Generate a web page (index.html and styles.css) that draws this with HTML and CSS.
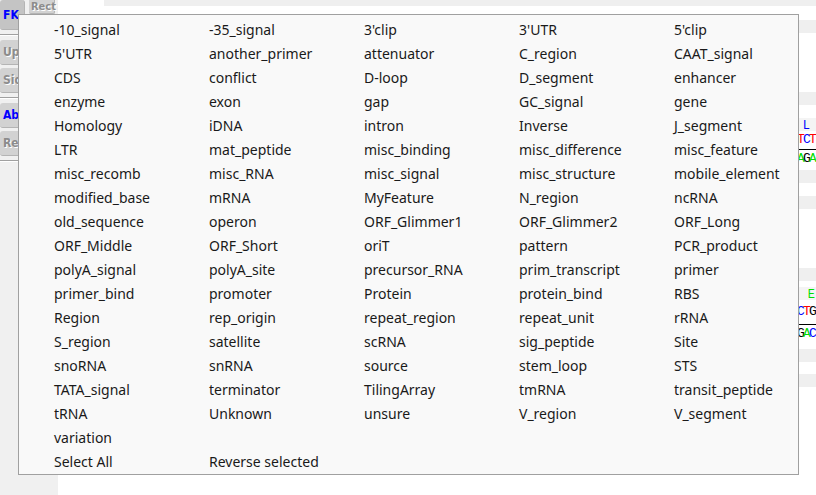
FILE: index.html
```html
<!DOCTYPE html>
<html lang="en">
<head>
    <meta charset="UTF-8">
    <meta name="viewport" content="width=device-width, initial-scale=1.0">
    <title>Feature Types</title>
    <link rel="stylesheet" href="styles.css">
</head>
<body>
    <div class="app">
        <div class="side">
            <div class="tool-row">
                <div class="tool tool-active">FK</div>
                <div class="tool tool-small">Rect</div>
            </div>
            <div class="sep"></div>
            <div class="tool">Up</div>
            <div class="tool">Sid</div>
            <div class="sep"></div>
            <div class="tool tool-blue">Ab</div>
            <div class="tool">Re</div>
            <div class="sep"></div>
        </div>
        <div class="main">
            <div class="band band-top"></div>
            <div class="band" style="margin-top: 14px"></div>
            <div class="band" style="margin-top: 59px"></div>
            <div class="track" style="margin-top: 13px">
                <div class="track-label"><span class="b">L</span><span class="pad">&nbsp;</span></div>
                <div class="seq"><span class="r">T</span><span class="b">C</span><span class="r">T</span></div>
                <div class="seq seq-rev"><span class="g">A</span><span class="k">G</span><span class="g">A</span></div>
            </div>
            <div class="band" style="margin-top: 5px"></div>
            <div class="band" style="margin-top: 13px"></div>
            <div class="band" style="margin-top: 59px"></div>
            <div class="track track-wide" style="margin-top: 6px">
                <div class="track-label"><span class="g">E</span></div>
                <div class="seq"><span class="b">C</span><span class="r">T</span><span class="k">G</span></div>
                <div class="seq seq-rev"><span class="k">G</span><span class="g">A</span><span class="b">C</span></div>
            </div>
            <div class="band" style="margin-top: 9px"></div>
            <div class="band" style="margin-top: 12px"></div>
        </div>
    </div>

    <div class="menu">
        <div id="menuItems" class="menu-grid"></div>
    </div>

    <script>
        const featureTypes = [
            "-10_signal", "-35_signal", "3'clip", "3'UTR", "5'clip",
            "5'UTR", "another_primer", "attenuator", "C_region", "CAAT_signal",
            "CDS", "conflict", "D-loop", "D_segment", "enhancer",
            "enzyme", "exon", "gap", "GC_signal", "gene",
            "Homology", "iDNA", "intron", "Inverse", "J_segment",
            "LTR", "mat_peptide", "misc_binding", "misc_difference", "misc_feature",
            "misc_recomb", "misc_RNA", "misc_signal", "misc_structure", "mobile_element",
            "modified_base", "mRNA", "MyFeature", "N_region", "ncRNA",
            "old_sequence", "operon", "ORF_Glimmer1", "ORF_Glimmer2", "ORF_Long",
            "ORF_Middle", "ORF_Short", "oriT", "pattern", "PCR_product",
            "polyA_signal", "polyA_site", "precursor_RNA", "prim_transcript", "primer",
            "primer_bind", "promoter", "Protein", "protein_bind", "RBS",
            "Region", "rep_origin", "repeat_region", "repeat_unit", "rRNA",
            "S_region", "satellite", "scRNA", "sig_peptide", "Site",
            "snoRNA", "snRNA", "source", "stem_loop", "STS",
            "TATA_signal", "terminator", "TilingArray", "tmRNA", "transit_peptide",
            "tRNA", "Unknown", "unsure", "V_region", "V_segment",
            "variation"
        ];

        const menu = document.getElementById('menuItems');
        let html = '';
        featureTypes.forEach(name => {
            html += `<div class="menu-item">${name}</div>`;
        });
        html += '<div class="menu-item menu-action">Select All</div>';
        html += '<div class="menu-item">Reverse selected</div>';
        menu.innerHTML = html;
    </script>
</body>
</html>
```

FILE: styles.css
```css
body {
    margin: 0;
    width: 816px;
    height: 495px;
    overflow: hidden;
    background-color: #fff;
    font-family: 'Noto Sans', 'Segoe UI', sans-serif;
}
.app {
    display: flex;
    height: 495px;
}
.side {
    width: 58px;
    flex-shrink: 0;
    background-color: #f0f0f0;
    display: flex;
    flex-direction: column;
    gap: 3px;
}
.tool-row {
    display: flex;
    gap: 4px;
    align-items: flex-start;
}
.tool {
    width: 25px;
    height: 25px;
    box-sizing: border-box;
    background-color: #d2d2d2;
    border-radius: 3px;
    border-right: 1px solid #b4b4b4;
    border-bottom: 1px solid #b4b4b4;
    font-family: 'DejaVu Sans Condensed', 'DejaVu Sans', sans-serif;
    font-weight: bold;
    font-size: 12px;
    line-height: 25px;
    padding-left: 3px;
    color: #8c8c8c;
    text-shadow: 1px 1px 0 #fff;
}
.tool-active {
    height: 30px;
    line-height: 30px;
    background-color: #c4c4c4;
    color: #0000ff;
    text-shadow: none;
}
.tool-blue {
    color: #0000ff;
    text-shadow: none;
}
.tool-small {
    width: 26px;
    height: 14px;
    line-height: 13px;
    padding-left: 2px;
    font-size: 11px;
    border-radius: 0 0 2px 2px;
}
.sep {
    height: 1px;
    margin: 1px 0;
    background-color: #a0a0a0;
    border-bottom: 1px solid #fff;
}
.main {
    flex: 1;
    display: flex;
    flex-direction: column;
}
.band {
    height: 13px;
    background-color: #efefef;
}
.band-top {
    height: 6px;
    margin-left: 46px;
}
.track {
    display: flex;
    flex-direction: column;
    font-family: 'Liberation Mono', monospace;
    font-size: 13px;
    text-align: right;
}
.track-label {
    height: 15px;
    box-sizing: border-box;
    padding: 2px 1px 0 0;
    font-size: 12px;
    line-height: 13px;
    background: linear-gradient(#f4f4f4 13px, transparent 13px);
}
.track-label .pad {
    display: inline-block;
    width: 5px;
}
.seq {
    height: 13px;
    line-height: 13px;
    letter-spacing: -1.8px;
    padding-right: 1px;
}
.seq-rev {
    margin-top: 3px;
    border-top: 1px solid #000;
    padding-top: 2px;
}
.track-wide .seq {
    margin-top: 3px;
}
.track-wide .seq-rev {
    margin-top: 6px;
}
.r { color: #ff0000; }
.b { color: #0000ff; }
.g { color: #00dd00; }
.k { color: #000; }

.menu {
    position: absolute;
    left: 18px;
    top: 14px;
    width: 781px;
    height: 461px;
    box-sizing: border-box;
    background-color: #f9f9f9;
    border: 1px solid #a0a0a0;
    padding: 3px 0 0 35px;
}
.menu-grid {
    display: grid;
    grid-template-columns: repeat(4, 155px) 1fr;
    grid-auto-rows: 24px;
}
.menu-item {
    font-size: 14px;
    line-height: 24px;
    color: #1a1a1a;
    white-space: nowrap;
}
.menu-action {
    grid-column-start: 1;
}
```
